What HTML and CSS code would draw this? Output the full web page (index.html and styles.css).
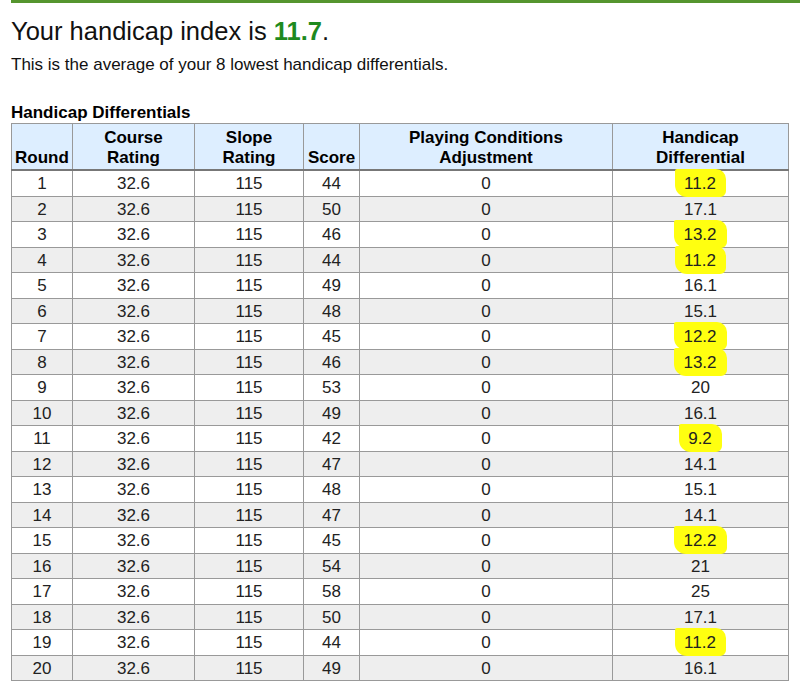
FILE: index.html
```html
<!DOCTYPE html>
<html lang="en">
<head>
<meta charset="utf-8">
<title>Handicap Index</title>
<link rel="stylesheet" href="styles.css">
</head>
<body>
<div class="topbar"></div>
<main class="page">
  <h1 class="title">Your handicap index is <span class="index">11.7</span>.</h1>
  <p class="subtitle">This is the average of your 8 lowest handicap differentials.</p>
  <table class="diffs">
    <caption class="caption">Handicap Differentials</caption>
    <colgroup>
      <col class="c-round"><col class="c-course"><col class="c-slope"><col class="c-score"><col class="c-pca"><col class="c-diff">
    </colgroup>
    <thead>
      <tr><th>Round</th><th>Course<br>Rating</th><th>Slope<br>Rating</th><th>Score</th><th>Playing Conditions<br>Adjustment</th><th>Handicap<br>Differential</th></tr>
    </thead>
    <tbody>
      <tr><td>1</td><td>32.6</td><td>115</td><td>44</td><td>0</td><td><span class="hl">11.2</span></td></tr>
      <tr><td>2</td><td>32.6</td><td>115</td><td>50</td><td>0</td><td>17.1</td></tr>
      <tr><td>3</td><td>32.6</td><td>115</td><td>46</td><td>0</td><td><span class="hl">13.2</span></td></tr>
      <tr><td>4</td><td>32.6</td><td>115</td><td>44</td><td>0</td><td><span class="hl">11.2</span></td></tr>
      <tr><td>5</td><td>32.6</td><td>115</td><td>49</td><td>0</td><td>16.1</td></tr>
      <tr><td>6</td><td>32.6</td><td>115</td><td>48</td><td>0</td><td>15.1</td></tr>
      <tr><td>7</td><td>32.6</td><td>115</td><td>45</td><td>0</td><td><span class="hl">12.2</span></td></tr>
      <tr><td>8</td><td>32.6</td><td>115</td><td>46</td><td>0</td><td><span class="hl">13.2</span></td></tr>
      <tr><td>9</td><td>32.6</td><td>115</td><td>53</td><td>0</td><td>20</td></tr>
      <tr><td>10</td><td>32.6</td><td>115</td><td>49</td><td>0</td><td>16.1</td></tr>
      <tr><td>11</td><td>32.6</td><td>115</td><td>42</td><td>0</td><td><span class="hl">9.2</span></td></tr>
      <tr><td>12</td><td>32.6</td><td>115</td><td>47</td><td>0</td><td>14.1</td></tr>
      <tr><td>13</td><td>32.6</td><td>115</td><td>48</td><td>0</td><td>15.1</td></tr>
      <tr><td>14</td><td>32.6</td><td>115</td><td>47</td><td>0</td><td>14.1</td></tr>
      <tr><td>15</td><td>32.6</td><td>115</td><td>45</td><td>0</td><td><span class="hl">12.2</span></td></tr>
      <tr><td>16</td><td>32.6</td><td>115</td><td>54</td><td>0</td><td>21</td></tr>
      <tr><td>17</td><td>32.6</td><td>115</td><td>58</td><td>0</td><td>25</td></tr>
      <tr><td>18</td><td>32.6</td><td>115</td><td>50</td><td>0</td><td>17.1</td></tr>
      <tr><td>19</td><td>32.6</td><td>115</td><td>44</td><td>0</td><td><span class="hl">11.2</span></td></tr>
      <tr><td>20</td><td>32.6</td><td>115</td><td>49</td><td>0</td><td>16.1</td></tr>
    </tbody>
  </table>
</main>
</body>
</html>
```

FILE: styles.css
```css
html, body {
  margin: 0;
  padding: 0;
  background: #ffffff;
}

body {
  font-family: "Liberation Sans", Arial, sans-serif;
  color: #111;
}

.topbar {
  height: 3px;
  margin-left: 11px;
  background: #55952e;
}

.page {
  padding: 0 12px 0 11px;
}

.title {
  margin: 14px 0 0;
  font-size: 25.5px;
  font-weight: normal;
  line-height: normal;
  color: #111;
}

.index {
  color: #1e8a1e;
  font-weight: bold;
}

.subtitle {
  margin: 9px 0 0;
  font-size: 17px;
  line-height: normal;
}

.diffs {
  margin-top: 28px;
  width: 777px;
  border-collapse: collapse;
  table-layout: fixed;
  font-size: 17px;
  border: 1px solid #999;
}

.caption {
  caption-side: top;
  text-align: left;
  font-weight: bold;
  padding-bottom: 0;
  color: #000;
}

.c-round { width: 61px; }
.c-course { width: 122px; }
.c-slope { width: 109px; }
.c-score { width: 56px; }
.c-pca { width: 253px; }
.c-diff { width: 176px; }

.diffs th {
  background: #ddeeff;
  font-weight: bold;
  color: #000;
  border: 1px solid #999;
  border-bottom: 2px solid #777;
  padding: 4px 2px 2px;
  line-height: 19.5px;
  vertical-align: bottom;
  text-align: center;
}

.diffs td {
  border: 1px solid #999;
  padding: 3px 2px 2px;
  line-height: 19.5px;
  text-align: center;
  color: #222;
}

.diffs tbody tr:nth-child(even) td {
  background: #eeeeee;
}

.hl {
  background: #ffff10;
  padding: 5px 10px 4px 9px;
  border-radius: 2px 10px 6px 12px;
}
```
